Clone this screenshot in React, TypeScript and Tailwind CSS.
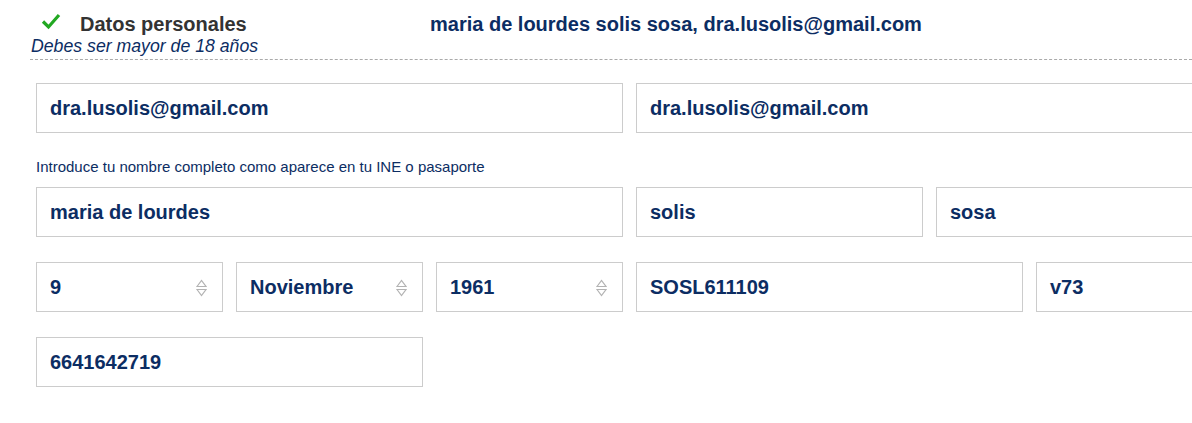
import type { ReactNode } from "react";

const navy = "text-[#0c2d63]";

function Field({ span, children, select }: { span: string; children: ReactNode; select?: boolean }) {
  return (
    <div
      className={`${span} relative flex h-[50px] items-center border border-[#cccccc] bg-white pl-[13px] text-[20px] font-bold ${navy}`}
    >
      <span>{children}</span>
      {select && (
        <svg
          className="absolute right-[15px] top-[16px]"
          width="11"
          height="18"
          viewBox="0 0 11 18"
          fill="none"
          stroke="#b3b3b3"
          strokeWidth="1.2"
        >
          <path d="M1 7.5 L5.5 1.5 L10 7.5 Z" />
          <path d="M1 10.5 L5.5 16.5 L10 10.5 Z" />
        </svg>
      )}
    </div>
  );
}

export default function App() {
  return (
    <div className="h-[423px] w-[1192px] overflow-hidden bg-white font-['Liberation_Sans',Arial,sans-serif]">
      {/* Header */}
      <div className="flex h-[36px] items-end pl-[41px]">
        <svg width="20" height="18" viewBox="0 0 20 18" className="mb-[6px]">
          <path d="M2 9.5 L7.5 15 L18 3" fill="none" stroke="#22a822" strokeWidth="3.2" />
        </svg>
        <span className="ml-[19px] w-[350px] text-[20px] font-bold leading-[24px] text-[#333333]">Datos personales</span>
        <span className={`text-[20px] font-bold leading-[24px] ${navy}`}>
          maria de lourdes solis sosa, dra.lusolis@gmail.com
        </span>
      </div>
      <div className={`pl-[31px] text-[17.7px] italic leading-[20px] ${navy}`}>Debes ser mayor de 18 años</div>
      <div className="ml-[30px] mt-[3px] border-t border-dashed border-[#aaaaaa]" />

      {/* Form */}
      <div className="w-[1223px] pl-[36px] pt-[23px]">
        <div className="grid grid-cols-12 gap-x-[13px]">
          <Field span="col-span-6">dra.lusolis@gmail.com</Field>
          <Field span="col-span-6">dra.lusolis@gmail.com</Field>
        </div>
        <p className={`mt-[26px] mb-[12px] text-[15px] leading-[16px] ${navy}`}>
          Introduce tu nombre completo como aparece en tu INE o pasaporte
        </p>
        <div className="grid grid-cols-12 gap-x-[13px] gap-y-[25px]">
          <Field span="col-span-6">maria de lourdes</Field>
          <Field span="col-span-3">solis</Field>
          <Field span="col-span-3">sosa</Field>

          <Field span="col-span-2" select>9</Field>
          <Field span="col-span-2" select>Noviembre</Field>
          <Field span="col-span-2" select>1961</Field>
          <Field span="col-span-4">SOSL611109</Field>
          <Field span="col-span-2">v73</Field>

          <Field span="col-span-4">6641642719</Field>
        </div>
      </div>
    </div>
  );
}
